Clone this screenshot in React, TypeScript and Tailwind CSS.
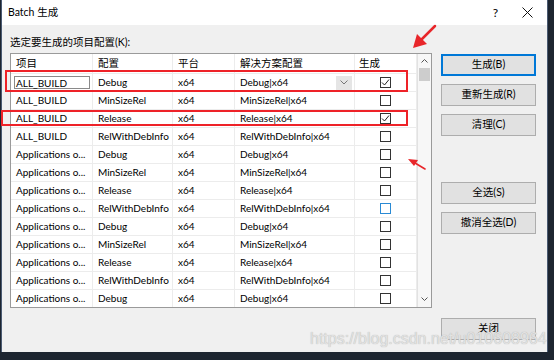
import React from "react";

const FONT = 'Lato, "Noto Sans CJK SC", sans-serif';

type Row = { p: string; c: string; s: string; checked?: boolean; hover?: boolean; edit?: boolean };

const rows: Row[] = [
  { p: "ALL_BUILD", c: "Debug", s: "Debug|x64", checked: true, edit: true },
  { p: "ALL_BUILD", c: "MinSizeRel", s: "MinSizeRel|x64" },
  { p: "ALL_BUILD", c: "Release", s: "Release|x64", checked: true },
  { p: "ALL_BUILD", c: "RelWithDebInfo", s: "RelWithDebInfo|x64" },
  { p: "Applications o...", c: "Debug", s: "Debug|x64" },
  { p: "Applications o...", c: "MinSizeRel", s: "MinSizeRel|x64" },
  { p: "Applications o...", c: "Release", s: "Release|x64" },
  { p: "Applications o...", c: "RelWithDebInfo", s: "RelWithDebInfo|x64", hover: true },
  { p: "Applications o...", c: "Debug", s: "Debug|x64" },
  { p: "Applications o...", c: "MinSizeRel", s: "MinSizeRel|x64" },
  { p: "Applications o...", c: "Release", s: "Release|x64" },
  { p: "Applications o...", c: "RelWithDebInfo", s: "RelWithDebInfo|x64" },
  { p: "Applications o...", c: "Debug", s: "Debug|x64" },
];

function Check({ checked, hover }: { checked?: boolean; hover?: boolean }) {
  return (
    <div
      className={`w-[11px] h-[11px] border bg-white flex items-center justify-center ${
        hover ? "border-[#2a8ad4]" : "border-[#333333]"
      }`}
    >
      {checked && (
        <svg width="9" height="9" viewBox="0 0 9 9">
          <path d="M1 4.5 L3.5 7 L8 1.5" fill="none" stroke="#222" strokeWidth="1" />
        </svg>
      )}
    </div>
  );
}

function Btn({ children, primary }: { children: React.ReactNode; primary?: boolean }) {
  return (
    <div
      className={`h-[22px] w-[95px] flex items-center justify-center bg-[#e1e1e1] text-[10.5px] text-black ${
        primary ? "border-2 border-[#0078d7]" : "border border-[#adadad]"
      }`}
    >
      {children}
    </div>
  );
}

export default function App() {
  const cell = "h-full flex items-center border-r border-[#ececec] overflow-hidden whitespace-nowrap";
  return (
    <div className="relative w-[554px] h-[360px] bg-[#1d2530] overflow-hidden" style={{ fontFamily: FONT }}>
      <div className="flex pl-[1px] pr-[6px] pb-[8px] h-full">
        <div className="flex-1 flex flex-col border-l border-r border-[#4a5a72] bg-[#f0f0f0]">
          {/* title bar */}
          <div className="h-[25px] bg-white flex items-center pl-[6px] pr-[10px] text-[10.5px] text-black">
            <span>Batch 生成</span>
            <span className="ml-auto mr-[24px] text-[12px]">?</span>
            <svg width="11" height="11" viewBox="0 0 11 11" className="mr-[4px]">
              <path d="M0.5 0.5 L10.5 10.5 M10.5 0.5 L0.5 10.5" stroke="#111" strokeWidth="1" />
            </svg>
          </div>
          {/* body */}
          <div className="flex-1 flex pl-[8px] pr-[10px] pt-[8px]">
            <div className="flex flex-col w-[422px]">
              <div className="h-[20px] text-[10.5px] text-black flex items-center">
                选定要生成的项目配置(K):
              </div>
              <div className="h-[255px] border border-[#9a9a9a] bg-white flex">
                <div className="flex flex-col w-[406px] text-[10.5px] text-black">
                  <div className="h-[19px] grid grid-cols-[82px_80px_62px_120px_62px] shrink-0">
                    <div className={`${cell} pl-[5px]`}>项目</div>
                    <div className={`${cell} pl-[5px]`}>配置</div>
                    <div className={`${cell} pl-[5px]`}>平台</div>
                    <div className={`${cell} pl-[5px]`}>解决方案配置</div>
                    <div className={`${cell} pl-[4px]`}>生成</div>
                  </div>
                  {rows.map((r, i) => (
                    <div key={i} className="h-[18px] grid grid-cols-[82px_80px_62px_120px_62px] border-t border-[#ececec] shrink-0 text-[10px]">
                      <div className={`${cell} pl-[3px]`}>
                        {r.edit ? (
                          <div className="w-[76px] h-[13px] border border-[#8a8a8a] bg-white flex items-center pl-[1px] leading-none">
                            {r.p}
                          </div>
                        ) : (
                          <span className="pl-[2px]">{r.p}</span>
                        )}
                      </div>
                      <div className={`${cell} pl-[5px]`}>{r.c}</div>
                      <div className={`${cell} pl-[5px]`}>x64</div>
                      <div className={`${cell} pl-[5px] pr-[2px]`}>
                        <span>{r.s}</span>
                        {r.edit && (
                          <div className="ml-auto w-[16px] h-[14px] bg-[#e5e5e5] flex items-center justify-center">
                            <svg width="8" height="5" viewBox="0 0 8 5">
                              <path d="M0.5 0.5 L4 4 L7.5 0.5" fill="none" stroke="#777" strokeWidth="1" />
                            </svg>
                          </div>
                        )}
                      </div>
                      <div className={`${cell} justify-center`}>
                        <Check checked={r.checked} hover={r.hover} />
                      </div>
                    </div>
                  ))}
                </div>
                {/* scrollbar */}
                <div className="w-[14px] bg-[#f7f7f7] border-l border-[#e2e2e2] flex flex-col items-center">
                  <div className="h-[14px] flex items-center justify-center">
                    <svg width="7" height="4" viewBox="0 0 7 4">
                      <path d="M0.5 3.5 L3.5 0.5 L6.5 3.5" fill="none" stroke="#555" strokeWidth="1" />
                    </svg>
                  </div>
                  <div className="w-[11px] h-[13px] bg-[#cdcdcd]" />
                  <div className="flex-1" />
                  <div className="h-[14px] flex items-center justify-center mb-[1px]">
                    <svg width="7" height="4" viewBox="0 0 7 4">
                      <path d="M0.5 0.5 L3.5 3.5 L6.5 0.5" fill="none" stroke="#555" strokeWidth="1" />
                    </svg>
                  </div>
                </div>
              </div>
            </div>
            <div className="ml-[9px] flex flex-col pt-[21px]">
              <Btn primary>生成(B)</Btn>
              <div className="h-[8px]" />
              <Btn>重新生成(R)</Btn>
              <div className="h-[8px]" />
              <Btn>清理(C)</Btn>
              <div className="h-[46px]" />
              <Btn>全选(S)</Btn>
              <div className="h-[8px]" />
              <Btn>撤消全选(D)</Btn>
              <div className="h-[84px]" />
              <Btn>关闭</Btn>
            </div>
          </div>
        </div>
      </div>

      {/* annotations */}
      <div className="absolute left-[5px] top-[70px] w-[403px] h-[22px] border-2 border-[#ee2228]" />
      <div className="absolute left-[1px] top-[110px] w-[407px] h-[16px] border-2 border-[#ee2228]" />
      <svg className="absolute left-[405px] top-[22px]" width="36" height="32" viewBox="0 0 36 32">
        <path d="M30 4 L16 18" stroke="#e8262a" strokeWidth="2.5" strokeLinecap="round" />
        <path d="M8 26 L12 12 L22 22 Z" fill="#e8262a" />
      </svg>
      <svg className="absolute left-[403px] top-[152px]" width="26" height="22" viewBox="0 0 26 22">
        <path d="M22 17 L12 11" stroke="#e8262a" strokeWidth="1.6" strokeLinecap="round" />
        <path d="M5 7 L15 8 L11 14 Z" fill="#e8262a" />
      </svg>
      {/* watermark */}
      <div
        className="absolute left-[310px] top-[331px] text-[16px] text-[#e2e2e2] leading-none [text-shadow:0_0_1px_#a8a8a8]"
        style={{ fontFamily: '"Liberation Sans", Arial, sans-serif' }}
      >
        https://blog.csdn.net/u010608964
      </div>
    </div>
  );
}
